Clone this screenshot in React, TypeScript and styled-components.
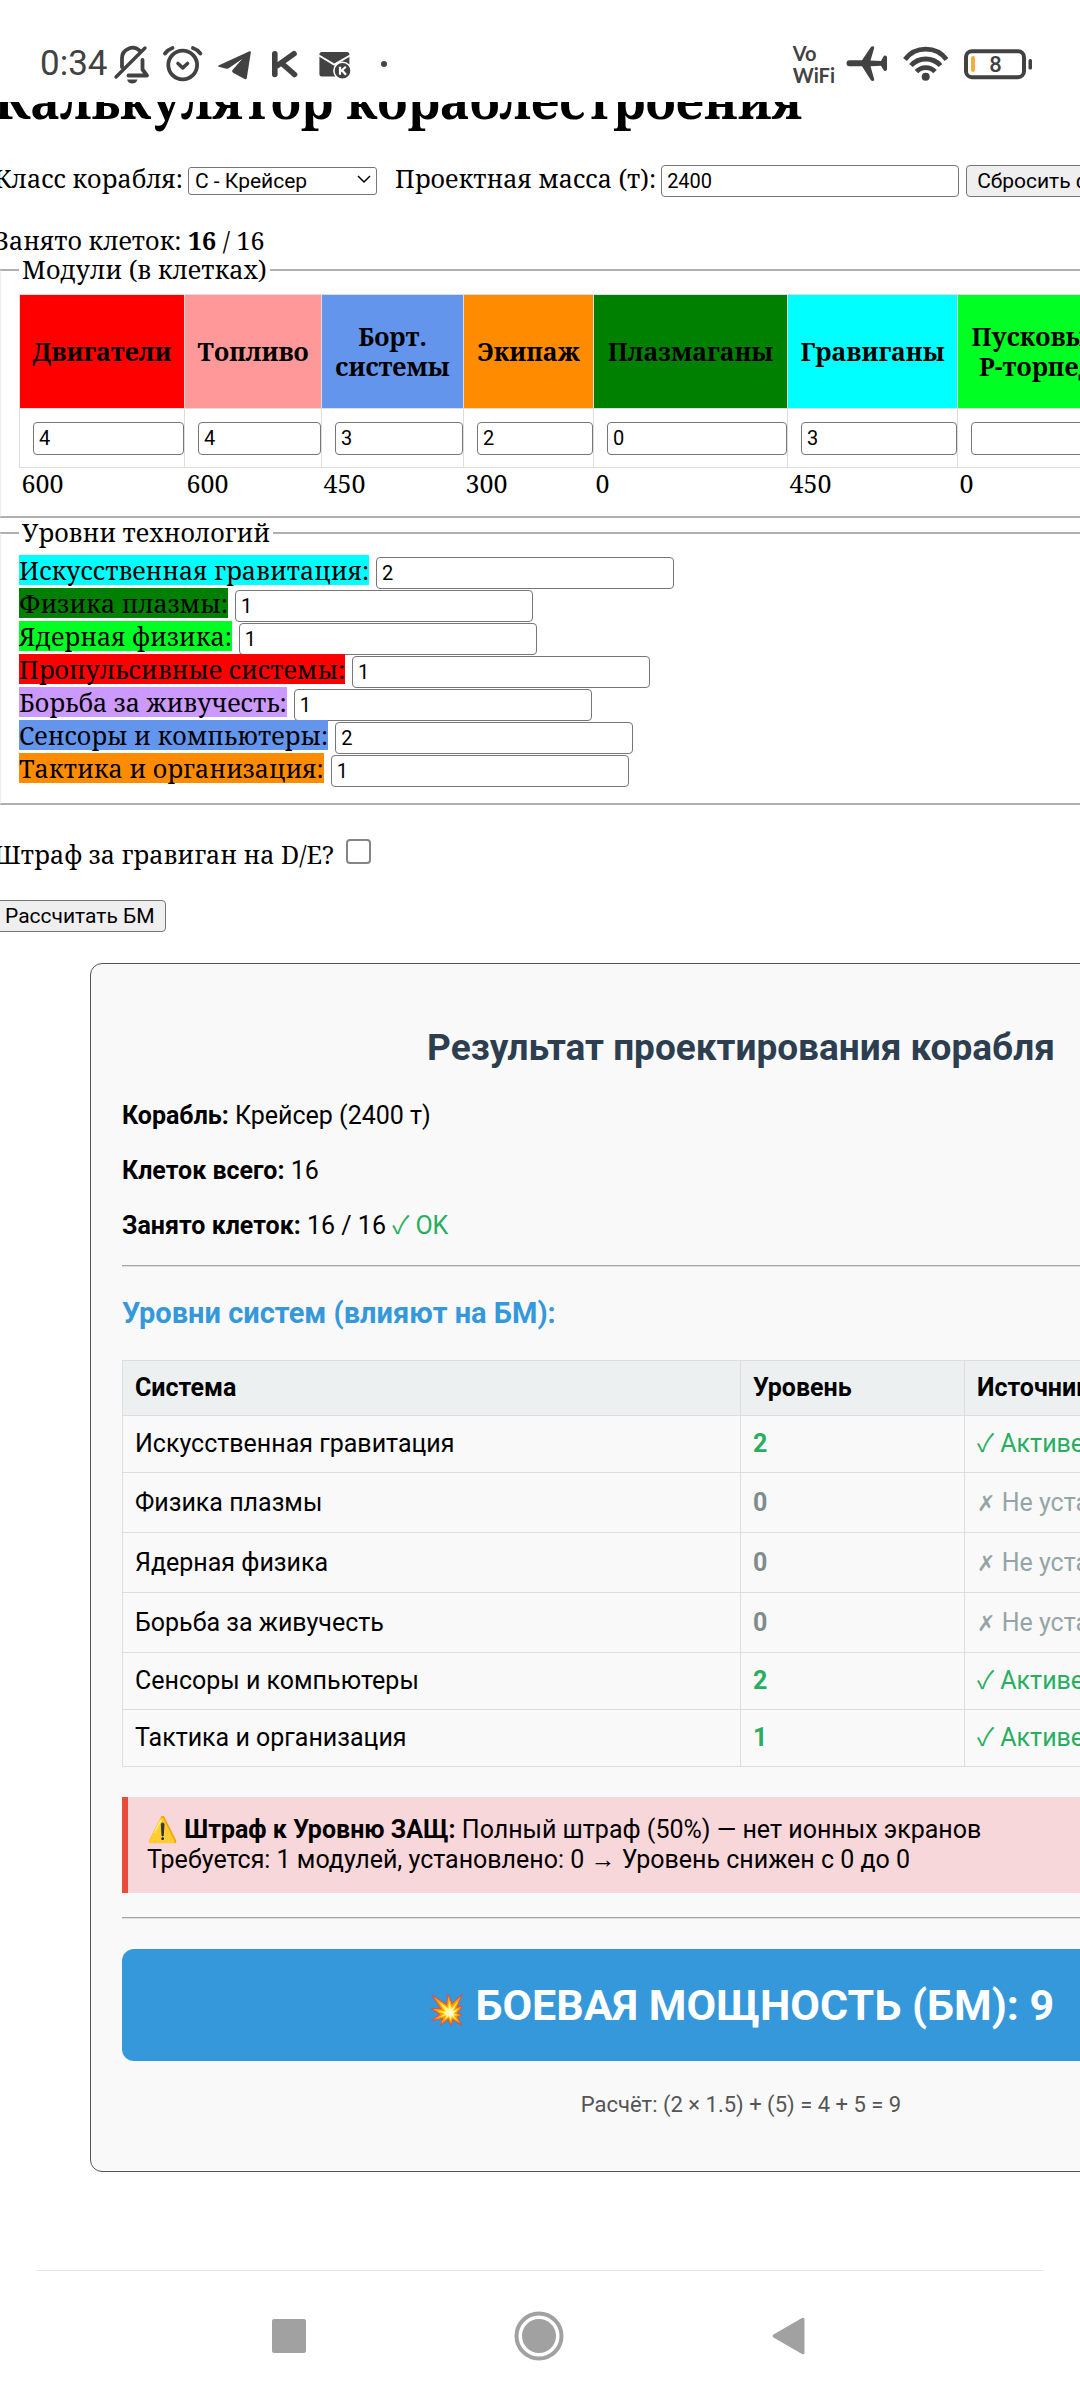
import React from "react";
import styled, { createGlobalStyle } from "styled-components";

const serif = `"Noto Serif", "Liberation Serif", serif`;
const sans = `Roboto, "Liberation Sans", sans-serif`;
const ink = "#424242";

const GlobalStyle = createGlobalStyle`
  *, *::before, *::after { box-sizing: border-box; }
  body { margin: 0; background: #fff; color: #000; }
`;

const Screen = styled.div`
  display: flex;
  flex-direction: column;
  min-height: 100vh;
  overflow: hidden;
`;

/* ---------- status bar ---------- */

const StatusBar = styled.header`
  display: flex;
  justify-content: space-between;
  align-items: center;
  flex: none;
  height: 102px;
  padding: 26px 48px 0 40px;
  background: #fff;
  color: ${ink};
  font-family: ${sans};
`;

const StatusLeft = styled.div`
  display: flex;
  align-items: center;
  gap: 9px;
`;

const StatusRight = styled.div`
  display: flex;
  align-items: center;
  gap: 15px;
`;

const Clock = styled.time`
  width: 62px;
  font-size: 35px;
  line-height: 42px;
  white-space: nowrap;
`;

const Carrier = styled.span`
  margin-right: -4px;
  font-family: Lato, ${sans};
  font-weight: 700;
  font-size: 20px;
  line-height: 22px;
  text-align: left;
`;

const Glyph = styled.svg`
  display: block;
  flex: none;
`;

/* ---------- page ---------- */

const WebView = styled.main`
  flex: 1;
  overflow: hidden;
`;

const Page = styled.div`
  min-width: 1494px;
  margin: -35px 0 0 -6px;
  padding-bottom: 80px;
  font-family: ${serif};
  font-size: 25px;
  line-height: 30px;
`;

const Heading = styled.h1`
  margin: 0 0 30px;
  font-size: 50px;
  line-height: 66px;
`;

const FormRow = styled.div<{ $top?: number }>`
  display: flex;
  align-items: baseline;
  margin-top: ${(p) => p.$top ?? 0}px;
`;

const TextBox = styled.input`
  width: 298px;
  height: 32px;
  margin: 0;
  padding: 0 5px;
  border: 1px solid #767676;
  border-radius: 4px;
  background: #fff;
  color: #000;
  font-family: ${sans};
  font-size: 20px;
`;

const SelectWrap = styled.span`
  position: relative;
  margin: 0 18px 0 5px;
`;

const Select = styled.select`
  appearance: none;
  width: 189px;
  height: 28px;
  padding: 0 6px;
  border: 1px solid #767676;
  border-radius: 3px;
  background: #fff;
  color: #000;
  font-family: ${sans};
  font-size: 21px;
`;

const Chevron = styled.svg`
  position: absolute;
  right: 6px;
  top: 50%;
  margin-top: -4px;
  pointer-events: none;
`;

const MassBox = styled(TextBox)`
  margin: 0 7px 0 5px;
`;

const PushButton = styled.button`
  height: 32px;
  padding: 0 10px;
  border: 1px solid #767676;
  border-radius: 4px;
  background: #efefef;
  color: #000;
  font-family: ${sans};
  font-size: 21px;
  white-space: nowrap;
`;

const Group = styled.fieldset<{ $top: number; $bottom: number }>`
  margin: 0 5px;
  padding: ${(p) => p.$top}px 18px ${(p) => p.$bottom}px;
  border: 2px solid #b0b0b0;
  border-left-color: #eee;
`;

const Legend = styled.legend`
  padding: 0 3px 2px;
  line-height: 28px;
`;

const ModuleTable = styled.table`
  border-collapse: collapse;
  table-layout: fixed;
  width: 1096px;
`;

const ModuleHead = styled.th<{ $color: string }>`
  height: 114px;
  padding: 0 4px 2px;
  border: 1px solid #ddd;
  background: ${(p) => p.$color};
  white-space: pre-line;
`;

const ModuleCell = styled.td`
  height: 59px;
  padding: 12px 0 12px 13px;
  border: 1px solid #ddd;
`;

const ModuleBox = styled(TextBox)`
  display: block;
  width: 100%;
  height: 33px;
`;

const ModuleMass = styled.td`
  padding: 0 2px 1px;
`;

const TechRow = styled.div`
  display: flex;
  align-items: baseline;
  gap: 7px;
  height: 33px;
`;

const TechLabel = styled.label<{ $color: string }>`
  background: ${(p) => p.$color};
`;

const CheckBox = styled.input`
  appearance: none;
  align-self: flex-start;
  width: 25px;
  height: 25px;
  margin: 0 0 0 12px;
  border: 2px solid #858585;
  border-radius: 4px;
  background: #fff;
`;

const Actions = styled.div`
  display: flex;
  margin: 31px 0;
`;

/* ---------- result card ---------- */

const Card = styled.section`
  max-width: 1302px;
  margin: 0 auto;
  padding: 31px;
  border: 1px solid #555;
  border-radius: 12px;
  background: #f9f9f9;
  font-family: ${sans};
`;

const CardTitle = styled.h2`
  margin: 31px 0;
  color: #2c3e50;
  font-size: 37px;
  line-height: 44px;
  text-align: center;
`;

const Facts = styled.div`
  display: grid;
  gap: 25px;
`;

const Fact = styled.p`
  margin: 0;
`;

const Rule = styled.hr<{ $bottom: number }>`
  margin: 24px 0 ${(p) => p.$bottom}px;
  border: 0;
  border-top: 1px solid #a6a6a6;
  border-bottom: 1px solid #dcdcdc;
`;

const Subtitle = styled.h3`
  margin: 0 0 30px;
  color: #3498db;
  font-size: 29px;
  line-height: 34px;
`;

const LevelTable = styled.table`
  width: 100%;
  border-collapse: collapse;
  table-layout: fixed;
  text-align: left;

  th,
  td {
    padding: 0 12px;
    border: 1px solid #ddd;
  }
`;

const LevelHead = styled.tr`
  height: 55px;
  background: #ecf0f1;
`;

const LevelRow = styled.tr<{ $active: boolean }>`
  height: ${(p) => (p.$active ? 57 : 60)}px;
`;

const Level = styled.td<{ $active: boolean }>`
  color: ${(p) => (p.$active ? "#27ae60" : "#7f8c8d")};
  font-weight: 700;
`;

const Source = styled.td<{ $active: boolean }>`
  color: ${(p) => (p.$active ? "#27ae60" : "#95a5a6")};
`;

const Check = styled.span`
  color: #27ae60;
`;

const Tick = styled.span`
  font-family: "Noto Sans CJK SC", sans-serif;
  line-height: 1;
`;

const Cross = styled.span`
  font-family: "DejaVu Sans", sans-serif;
  font-size: 22px;
  line-height: 1;
`;

const Alert = styled.div`
  margin-top: 30px;
  padding: 18px 19px;
  border-left: 6px solid #e74c3c;
  background: #f8d7da;
`;

const Power = styled.div`
  padding: 31px;
  border-radius: 12px;
  background: #3498db;
  color: #fff;
  font-size: 43px;
  font-weight: 700;
  line-height: 50px;
  text-align: center;
`;

const Blast = styled.span`
  font-size: 30px;
  line-height: 0;
`;

const Formula = styled.p`
  margin: 31px 0 22px;
  color: #555;
  font-size: 22px;
  line-height: 26px;
  text-align: center;
`;

/* ---------- navigation bar ---------- */

const NavBar = styled.nav`
  display: flex;
  flex: none;
  justify-content: center;
  align-items: center;
  gap: 200px;
  height: 130px;
  margin: 0 37px;
  padding-right: 2px;
  border-top: 1px solid #e3e3e3;
  background: #fff;
`;

const NavButton = styled.button`
  display: grid;
  place-items: center;
  width: 50px;
  height: 50px;
  padding: 0;
  border: 0;
  background: none;
`;

const modules = [
  { name: "Двигатели", color: "#ff0000", cells: "4", mass: 600, width: 165 },
  { name: "Топливо", color: "#ff9999", cells: "4", mass: 600, width: 137 },
  { name: "Борт.\nсистемы", color: "#6495ed", cells: "3", mass: 450, width: 142 },
  { name: "Экипаж", color: "#ff8c00", cells: "2", mass: 300, width: 130 },
  { name: "Плазмаганы", color: "#008000", cells: "0", mass: 0, width: 194 },
  { name: "Гравиганы", color: "#00ffff", cells: "3", mass: 450, width: 170 },
  { name: "Пусковые\nР-торпед", color: "#00ff22", cells: "", mass: 0, width: 158 },
];

const techs = [
  { name: "Искусственная гравитация", color: "#00ffff", level: "2" },
  { name: "Физика плазмы", color: "#008000", level: "1" },
  { name: "Ядерная физика", color: "#00ff22", level: "1" },
  { name: "Пропульсивные системы", color: "#ff0000", level: "1" },
  { name: "Борьба за живучесть", color: "#cc99ff", level: "1" },
  { name: "Сенсоры и компьютеры", color: "#6495ed", level: "2" },
  { name: "Тактика и организация", color: "#ff8c00", level: "1" },
];

const systems = [
  { name: "Искусственная гравитация", level: 2 },
  { name: "Физика плазмы", level: 0 },
  { name: "Ядерная физика", level: 0 },
  { name: "Борьба за живучесть", level: 0 },
  { name: "Сенсоры и компьютеры", level: 2 },
  { name: "Тактика и организация", level: 1 },
];

function StatusIcons() {
  const line = { fill: "none", stroke: ink, strokeLinecap: "round" as const, strokeLinejoin: "round" as const };
  return (
    <>
      <Glyph width="42" height="42" viewBox="0 0 42 42">
        <path {...line} strokeWidth="3.8" d="M11 24V15.500a10.500 10.500 0 0 1 18-7.500M31.500 17v9.500l4.500 6H17.500" />
        <path {...line} strokeWidth="3.4" d="M34 5 5 34" />
        <path fill={ink} d="M16 36.500h10.500c-1 3-3 4-5.200 4s-4.300-1-5.300-4z" />
      </Glyph>
      <Glyph width="42" height="42" viewBox="0 0 42 42">
        <circle {...line} strokeWidth="3.8" cx="20.7" cy="22" r="14.4" />
        <path {...line} strokeWidth="3.6" d="m16 20.500 4.700 4.300 4.800-4.300" />
        <path {...line} strokeWidth="3.8" d="M3 10.500C5 8 7.500 6 10.500 5M38.400 10.500c-2-2.500-4.500-4.500-7.500-5.500" />
      </Glyph>
      <Glyph width="42" height="42" viewBox="0 0 42 42">
        <path
          fill={ink}
          d="M5.500 22.500 36.500 8.300q1.600-.6 1.300 1.200L33.800 35q-.4 2-2.200 1L20 29.800q-1.800-1.300-.3-3L29.200 16 16 25q-1.500 1-3.500.5l-6.700-1.800q-1.500-.5-.3-1.200z"
        />
      </Glyph>
      <Glyph width="42" height="42" viewBox="0 0 42 42">
        <path {...line} strokeWidth="5.6" d="M10.800 10.800v20.700M30 10.800 13.500 22.500M18 20.500l12.500 11" />
      </Glyph>
      <Glyph width="42" height="42" viewBox="0 0 42 42">
        <rect x="4.4" y="9" width="30" height="24.5" rx="2.5" fill={ink} />
        <path d="m4 12.500 15.200 9L35 12.500" fill="none" stroke="#fff" strokeWidth="2" />
        <circle cx="27.5" cy="27.8" r="8.6" fill={ink} stroke="#fff" strokeWidth="1.6" />
        <path d="M25 23.800v8M30.800 23.800l-5 4.500M27 27.300l4 4.500" fill="none" stroke="#fff" strokeWidth="2.2" />
      </Glyph>
      <Glyph width="42" height="42" viewBox="0 0 42 42">
        <circle cx="18" cy="21" r="3" fill={ink} />
      </Glyph>
    </>
  );
}

export default function App() {
  return (
    <Screen>
      <GlobalStyle />
      <StatusBar>
        <StatusLeft>
          <Clock>0:34</Clock>
          <StatusIcons />
        </StatusLeft>
        <StatusRight>
          <Carrier>
            Vo
            <br />
            WiFi
          </Carrier>
          <Glyph width="42" height="42" viewBox="0 0 42 42">
            <path
              fill={ink}
              d="M3.500 17.300H16L24.600 4.500q.8-1.200 2.200-1.200 1.800 0 1.400 1.700L24.500 17.500 35 18l2.500-4.500q.5-1 1.700-1 1.800 0 1.800 1.800v12q0 1.800-1.800 1.800-1.200 0-1.700-1L35 22.700l-10.500.5 3.700 13q.4 1.700-1.400 1.700-1.400 0-2.200-1.200L16 23.300H3.500a3 3 0 0 1 0-6z"
            />
          </Glyph>
          <Glyph width="46" height="42" viewBox="0 0 46 42" fill="none" stroke={ink} strokeWidth="4.8">
            <path d="M2 16.500A26 26 0 0 1 43.500 16.500" />
            <path d="M8 22.500A20 20 0 0 1 37.500 22.500" />
            <path d="M13.500 28.700A12.500 12.500 0 0 1 32 28.700" />
            <circle cx="22.7" cy="33.8" r="4" fill={ink} stroke="none" />
          </Glyph>
          <Glyph width="68" height="42" viewBox="0 0 68 42">
            <rect x="2" y="8.2" width="58" height="26" rx="6" fill="none" stroke={ink} strokeWidth="4" />
            <rect x="64.5" y="16" width="3.5" height="10.5" rx="1.5" fill={ink} />
            <rect x="7" y="13" width="4" height="16" rx="2" fill="#f0ae45" />
            <text x="31.5" y="29" textAnchor="middle" fontFamily="Roboto, sans-serif" fontSize="22" fontWeight="500" fill={ink}>
              8
            </text>
          </Glyph>
        </StatusRight>
      </StatusBar>

      <WebView>
        <Page>
          <Heading>Калькулятор кораблестроения</Heading>

          <FormRow>
            <label htmlFor="ship-class">Класс корабля:</label>
            <SelectWrap>
              <Select id="ship-class" defaultValue="C">
                <option value="C">C - Крейсер</option>
              </Select>
              <Chevron width="14" height="9" viewBox="0 0 14 9" fill="none" stroke="#000" strokeWidth="1.5">
                <path d="m1 1 6 6 6-6" />
              </Chevron>
            </SelectWrap>
            <label htmlFor="mass">Проектная масса (т):</label>
            <MassBox id="mass" defaultValue="2400" />
            <PushButton type="button">Сбросить форму</PushButton>
          </FormRow>

          <FormRow $top={28}>
            <span>
              Занято клеток: <b>16</b> / 16
            </span>
          </FormRow>

          <Group $top={9} $bottom={17}>
            <Legend>Модули (в клетках)</Legend>
            <ModuleTable>
              <colgroup>
                {modules.map((m) => (
                  <col key={m.name} width={m.width} />
                ))}
              </colgroup>
              <thead>
                <tr>
                  {modules.map((m) => (
                    <ModuleHead key={m.name} $color={m.color} scope="col">
                      {m.name}
                    </ModuleHead>
                  ))}
                </tr>
              </thead>
              <tbody>
                <tr>
                  {modules.map((m) => (
                    <ModuleCell key={m.name}>
                      <ModuleBox aria-label={m.name} defaultValue={m.cells} />
                    </ModuleCell>
                  ))}
                </tr>
                <tr>
                  {modules.map((m) => (
                    <ModuleMass key={m.name}>{m.mass}</ModuleMass>
                  ))}
                </tr>
              </tbody>
            </ModuleTable>
          </Group>

          <Group $top={7} $bottom={17}>
            <Legend>Уровни технологий</Legend>
            {techs.map((t, i) => (
              <TechRow key={t.name}>
                <TechLabel htmlFor={`tech-${i}`} $color={t.color}>
                  {t.name}:
                </TechLabel>
                <TextBox id={`tech-${i}`} defaultValue={t.level} />
              </TechRow>
            ))}
          </Group>

          <FormRow $top={34}>
            <label htmlFor="penalty">Штраф за гравиган на D/E?</label>
            <CheckBox id="penalty" type="checkbox" />
          </FormRow>

          <Actions>
            <PushButton type="button">Рассчитать БМ</PushButton>
          </Actions>

          <Card>
            <CardTitle>Результат проектирования корабля</CardTitle>
            <Facts>
              <Fact>
                <b>Корабль:</b> Крейсер (2400 т)
              </Fact>
              <Fact>
                <b>Клеток всего:</b> 16
              </Fact>
              <Fact>
                <b>Занято клеток:</b> 16 / 16{" "}
                <Check>
                  <Tick>✓</Tick> OK
                </Check>
              </Fact>
            </Facts>
            <Rule $bottom={29} />
            <Subtitle>Уровни систем (влияют на БМ):</Subtitle>
            <LevelTable>
              <colgroup>
                <col width="618" />
                <col width="224" />
                <col />
              </colgroup>
              <thead>
                <LevelHead>
                  <th scope="col">Система</th>
                  <th scope="col">Уровень</th>
                  <th scope="col">Источник</th>
                </LevelHead>
              </thead>
              <tbody>
                {systems.map((s) => (
                  <LevelRow key={s.name} $active={s.level > 0}>
                    <td>{s.name}</td>
                    <Level $active={s.level > 0}>{s.level}</Level>
                    <Source $active={s.level > 0}>
                      {s.level > 0 ? (
                        <>
                          <Tick>✓</Tick> Активен
                        </>
                      ) : (
                        <>
                          <Cross>✗</Cross> Не установлен
                        </>
                      )}
                    </Source>
                  </LevelRow>
                ))}
              </tbody>
            </LevelTable>
            <Alert>
              ⚠️ <b>Штраф к Уровню ЗАЩ:</b> Полный штраф (50%) — нет ионных экранов
              <br />
              Требуется: 1 модулей, установлено: 0 → Уровень снижен с 0 до 0
            </Alert>
            <Rule $bottom={30} />
            <Power>
              <Blast>💥</Blast> БОЕВАЯ МОЩНОСТЬ (БМ): 9
            </Power>
            <Formula>Расчёт: (2 × 1.5) + (5) = 4 + 5 = 9</Formula>
          </Card>
        </Page>
      </WebView>

      <NavBar>
        <NavButton type="button" aria-label="Недавние">
          <svg width="34" height="34" viewBox="0 0 34 34">
            <rect width="34" height="34" rx="2" fill="#a1a1a1" />
          </svg>
        </NavButton>
        <NavButton type="button" aria-label="Домой">
          <svg width="50" height="50" viewBox="0 0 50 50">
            <circle cx="25" cy="25" r="22.5" fill="none" stroke="#a1a1a1" strokeWidth="4" />
            <circle cx="25" cy="25" r="17" fill="#a1a1a1" />
          </svg>
        </NavButton>
        <NavButton type="button" aria-label="Назад">
          <svg width="34" height="38" viewBox="0 0 34 38">
            <path
              d="M1.500 17.500 30 1q2.500-1.200 2.500 1.500v33q0 2.700-2.500 1.500L1.500 20.500q-2-1.500 0-3z"
              fill="#a1a1a1"
            />
          </svg>
        </NavButton>
      </NavBar>
    </Screen>
  );
}
